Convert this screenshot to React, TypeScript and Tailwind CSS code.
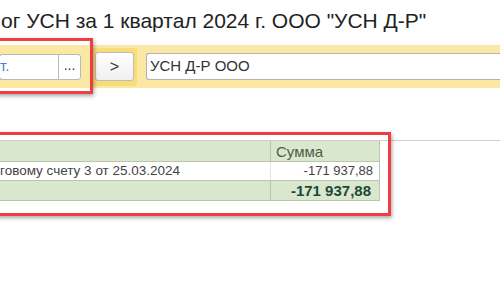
import React from "react";

export default function App() {
  return (
    <div className="relative w-[500px] h-[300px] bg-white overflow-hidden" style={{ fontFamily: '"Liberation Sans", Arial, sans-serif' }}>
      {/* Title */}
      <div className="h-[45px] pt-[8px] pl-[1px] text-[21px] leading-[25px] text-[#222] whitespace-nowrap">
        ог УСН за 1 квартал 2024 г. ООО "УСН Д-Р"
      </div>

      {/* Yellow toolbar */}
      <div className="h-[43px] bg-[#fbe8a3] flex items-center">
        <div className="flex items-center h-[26px] w-[82px] ml-[-1px]">
          <div className="h-[26px] w-[59px] bg-white border border-[#b9b9b9] border-r-0 rounded-l-[3px] flex items-center text-[15px] text-[#4a86c5]">
            т.
          </div>
          <div className="h-[26px] w-[23px] bg-white border border-[#b9b9b9] rounded-r-[3px] flex items-center justify-center text-[14px] text-[#333] pb-[3px]">
            ...
          </div>
        </div>
        <div className="ml-[11px] w-[45px] h-[38px] bg-[#f8dc78] rounded-[3px] flex items-center justify-center">
          <div className="w-[39px] h-[29px] bg-gradient-to-b from-white to-[#f0f0f0] border border-[#bdbdbd] rounded-[3px] flex items-center justify-center text-[16px] text-[#333]">
            &gt;
          </div>
        </div>
        <div className="ml-[9px] flex-1 h-[27px] bg-white border border-[#b3b3b3] border-r-0 rounded-l-[3px] flex items-center pl-[3px] text-[15px] text-[#333] whitespace-nowrap">
          УСН Д-Р ООО
        </div>
      </div>

      {/* gap */}
      <div className="h-[52px]" />

      {/* Table */}
      <div className="border-t border-[#cfcfcf]">
        <div className="w-[380px] border-r border-[#b8c8a8]">
          <div className="flex h-[21px] bg-[#d9e7cf] border-b border-[#b8c8a8]">
            <div className="w-[271px] border-r border-[#b8c8a8]" />
            <div className="flex-1 pl-[5px] text-[15px] leading-[21px] text-[#4f5d45]">Сумма</div>
          </div>
          <div className="flex h-[18px] bg-white">
            <div className="w-[271px] border-r border-[#dfe8d8] text-[13.5px] leading-[18px] text-[#444] whitespace-nowrap overflow-hidden">
              говому счету 3 от 25.03.2024
            </div>
            <div className="flex-1 text-right pr-[6px] text-[13px] leading-[18px] text-[#444]">-171 937,88</div>
          </div>
          <div className="flex h-[21px] bg-[#d9e7cf] border-t border-b border-[#b8c8a8]">
            <div className="w-[271px] border-r border-[#b8c8a8]" />
            <div className="flex-1 text-right pr-[8px] text-[15px] leading-[19px] font-bold text-[#1c4a34]">-171 937,88</div>
          </div>
        </div>
      </div>

      {/* Red highlight frames */}
      <div className="absolute left-[-4px] top-[38px] w-[97px] h-[56px] border-[3px] border-[#ef3d42] shadow-[1px_2px_4px_rgba(0,0,0,0.35)]" />
      <div className="absolute left-[-4px] top-[132px] w-[395px] h-[84px] border-[3px] border-[#ef3d42] shadow-[1px_2px_4px_rgba(0,0,0,0.35)]" />
    </div>
  );
}
